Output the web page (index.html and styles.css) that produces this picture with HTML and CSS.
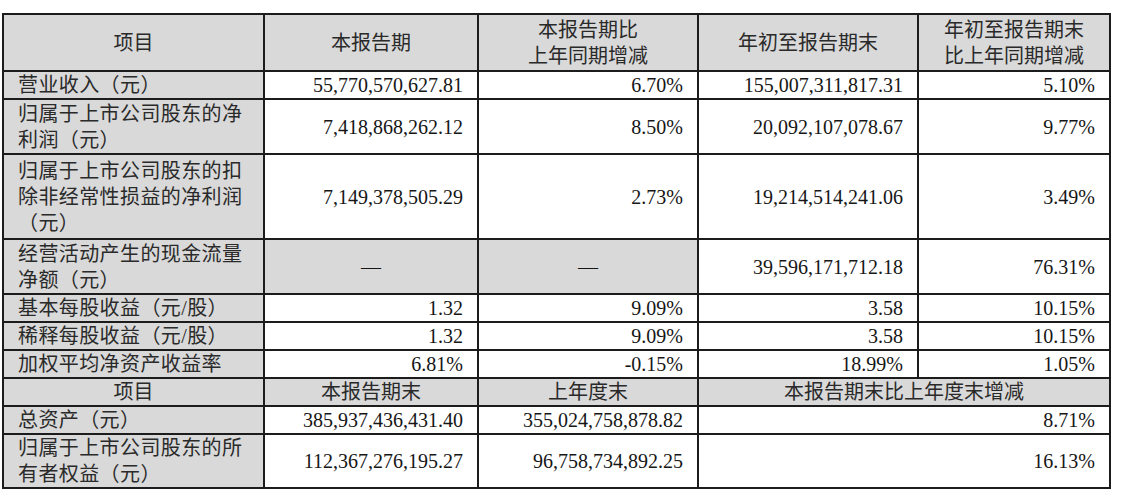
FILE: index.html
```html
<!DOCTYPE html>
<html lang="zh-CN">
<head>
<meta charset="utf-8">
<title>主要会计数据</title>
<link rel="stylesheet" href="styles.css">
</head>
<body>
<table class="fin">
  <colgroup>
    <col class="c1"><col class="c2"><col class="c3"><col class="c4"><col class="c5">
  </colgroup>
  <tr class="head h57">
    <td>项目</td>
    <td>本报告期</td>
    <td>本报告期比<br>上年同期增减</td>
    <td>年初至报告期末</td>
    <td>年初至报告期末<br>比上年同期增减</td>
  </tr>
  <tr>
    <td class="lbl">营业收入（元）</td>
    <td class="num">55,770,570,627.81</td>
    <td class="num">6.70%</td>
    <td class="num">155,007,311,817.31</td>
    <td class="num">5.10%</td>
  </tr>
  <tr class="h55">
    <td class="lbl">归属于上市公司股东的净<br>利润（元）</td>
    <td class="num">7,418,868,262.12</td>
    <td class="num">8.50%</td>
    <td class="num">20,092,107,078.67</td>
    <td class="num">9.77%</td>
  </tr>
  <tr class="h85">
    <td class="lbl">归属于上市公司股东的扣<br>除非经常性损益的净利润<br>（元）</td>
    <td class="num">7,149,378,505.29</td>
    <td class="num">2.73%</td>
    <td class="num">19,214,514,241.06</td>
    <td class="num">3.49%</td>
  </tr>
  <tr class="h55">
    <td class="lbl">经营活动产生的现金流量<br>净额（元）</td>
    <td class="dash">—</td>
    <td class="dash">—</td>
    <td class="num">39,596,171,712.18</td>
    <td class="num">76.31%</td>
  </tr>
  <tr>
    <td class="lbl">基本每股收益（元/股）</td>
    <td class="num">1.32</td>
    <td class="num">9.09%</td>
    <td class="num">3.58</td>
    <td class="num">10.15%</td>
  </tr>
  <tr>
    <td class="lbl">稀释每股收益（元/股）</td>
    <td class="num">1.32</td>
    <td class="num">9.09%</td>
    <td class="num">3.58</td>
    <td class="num">10.15%</td>
  </tr>
  <tr>
    <td class="lbl">加权平均净资产收益率</td>
    <td class="num">6.81%</td>
    <td class="num">-0.15%</td>
    <td class="num">18.99%</td>
    <td class="num">1.05%</td>
  </tr>
  <tr class="head">
    <td>项目</td>
    <td>本报告期末</td>
    <td>上年度末</td>
    <td colspan="2">本报告期末比上年度末增减</td>
  </tr>
  <tr>
    <td class="lbl">总资产（元）</td>
    <td class="num">385,937,436,431.40</td>
    <td class="num">355,024,758,878.82</td>
    <td class="num" colspan="2">8.71%</td>
  </tr>
  <tr class="h53">
    <td class="lbl">归属于上市公司股东的所<br>有者权益（元）</td>
    <td class="num">112,367,276,195.27</td>
    <td class="num">96,758,734,892.25</td>
    <td class="num" colspan="2">16.13%</td>
  </tr>
</table>
</body>
</html>
```
FILE: styles.css
```css
html, body {
  margin: 0;
  padding: 0;
  background: #ffffff;
}

.fin {
  margin: 13px 0 0 2px;
  width: 1107px;
  table-layout: fixed;
  border-collapse: collapse;
  font-family: "Liberation Serif", "Noto Sans CJK SC", serif;
  font-size: 20px;
  line-height: 26px;
  color: #161616;
}

.c1 { width: 261px; }
.c2 { width: 214px; }
.c3 { width: 220px; }
.c4 { width: 220px; }
.c5 { width: 192px; }

.fin td {
  border: 2px solid #1c1c1c;
  padding: 0 14px;
  vertical-align: middle;
  background: #ffffff;
  height: 26px;
}

.fin .head td {
  background: #d9d9d9;
  text-align: center;
  color: #2a2a2a;
}

.fin td.lbl {
  background: #d9d9d9;
  text-align: left;
  color: #2a2a2a;
  letter-spacing: 0.4px;
}

.fin td.num {
  text-align: right;
}

.fin td.dash {
  background: #d9d9d9;
  text-align: center;
}

.fin .h57 td { height: 55px; }
.fin .h55 td { height: 53px; }
.fin .h85 td { height: 83px; }
.fin .h53 td { height: 51px; }
```
